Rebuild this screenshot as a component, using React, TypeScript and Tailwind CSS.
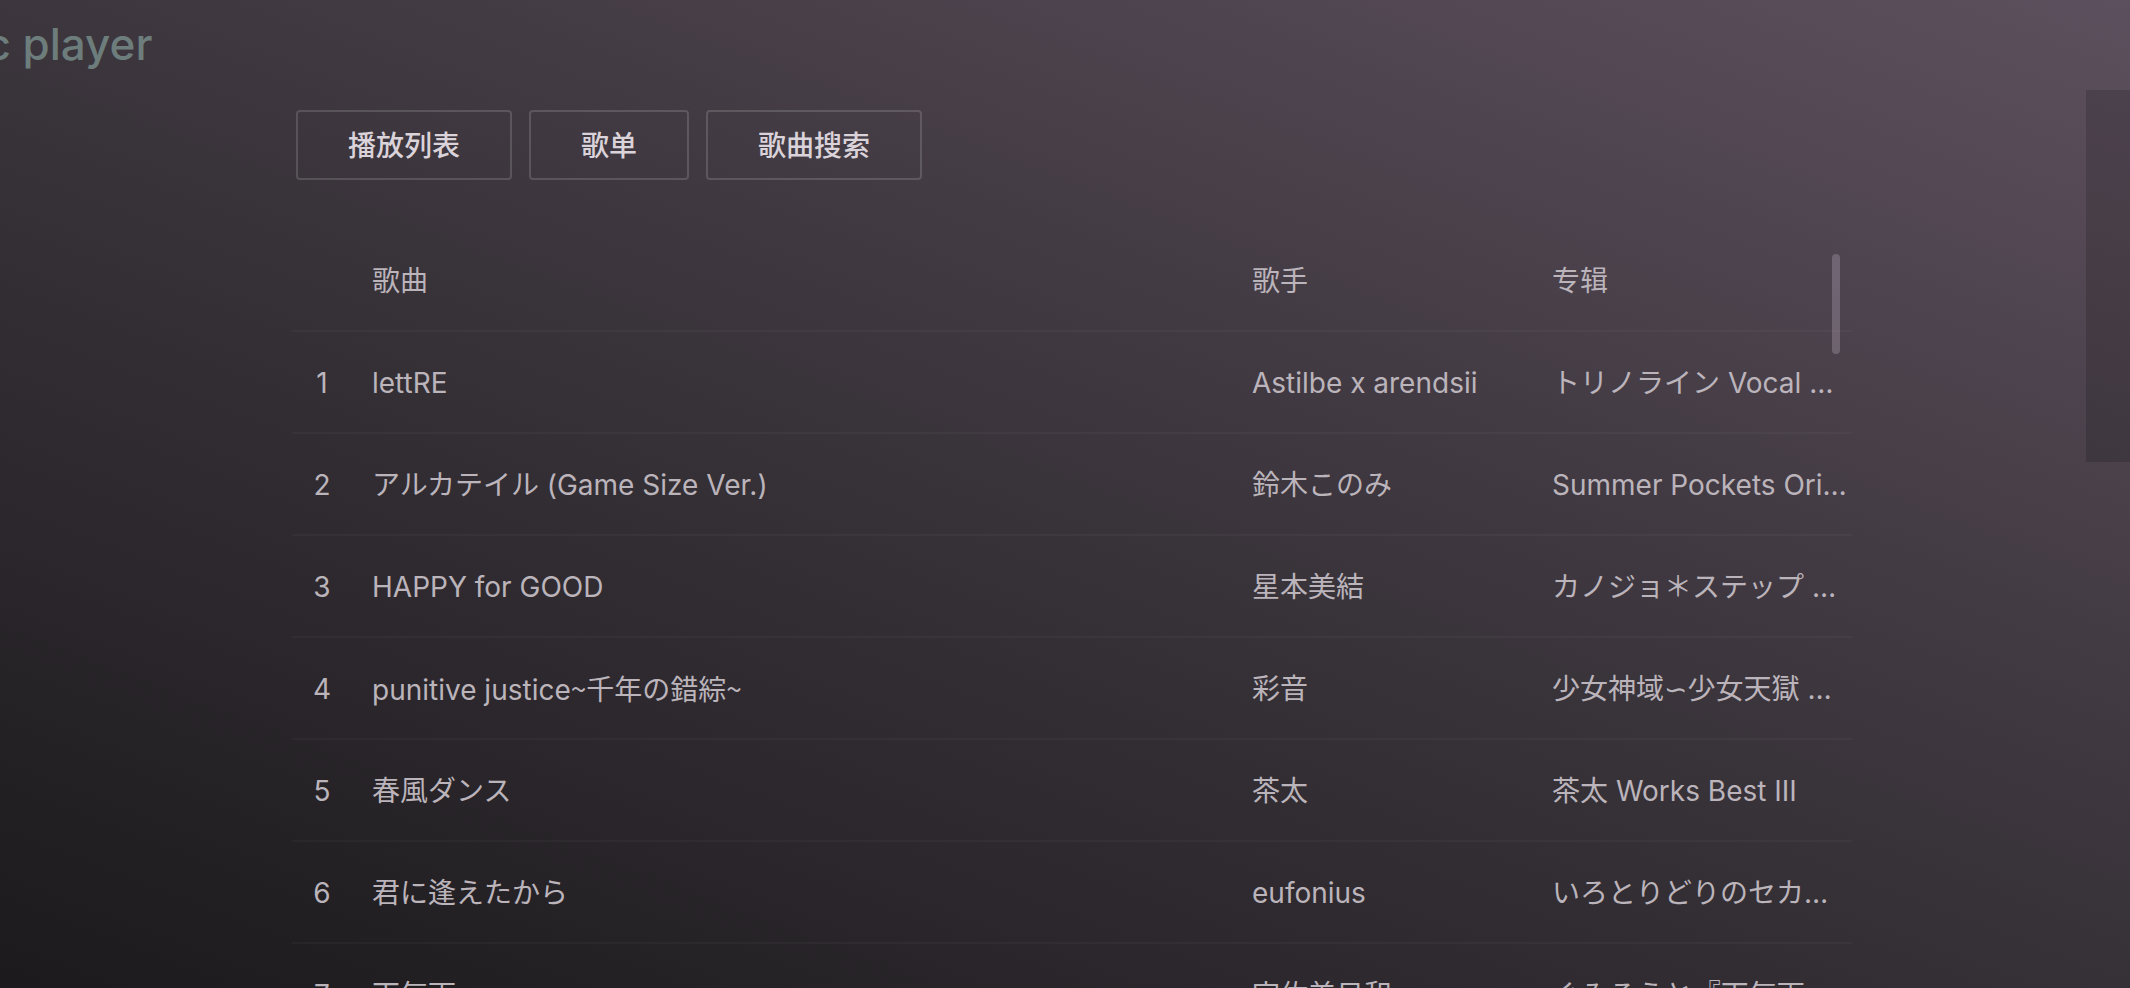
import type { ReactNode } from 'react';

type Song = { id: number; title: ReactNode; artist: string; album: ReactNode };

const Tilde = () => <span className="font-['Noto_Sans_CJK_JP',sans-serif]">~</span>;

const songs: Song[] = [
  { id: 1, title: 'lettRE', artist: 'Astilbe x arendsii', album: 'トリノライン Vocal Collection' },
  { id: 2, title: 'アルカテイル (Game Size Ver.)', artist: '鈴木このみ', album: 'Summer Pockets Original Soundtrack' },
  { id: 3, title: 'HAPPY for GOOD', artist: '星本美結', album: 'カノジョ＊ステップ Original Soundtrack' },
  {
    id: 4,
    title: (
      <>
        punitive justice
        <Tilde />
        千年の錯綜
        <Tilde />
      </>
    ),
    artist: '彩音',
    album: (
      <>
        少女神域<span className="font-['DejaVu_Sans',sans-serif] leading-none">∽</span>少女天獄 Original Soundtrack
      </>
    ),
  },
  { id: 5, title: '春風ダンス', artist: '茶太', album: '茶太 Works Best III' },
  { id: 6, title: '君に逢えたから', artist: 'eufonius', album: 'いろとりどりのセカイ Original Soundtrack' },
  { id: 7, title: '天気雨', artist: '宇佐美日和', album: 'ぐみろうと『天気雨 Original Soundtrack' },
];

const tabs = ['播放列表', '歌单', '歌曲搜索'];

const cell = 'truncate border-b-2 border-white/[0.03] pt-0.5 pb-0 pl-5 text-left font-normal';

export default function App() {
  return (
    <div className="relative h-screen overflow-hidden bg-linear-[21deg] from-[#1c1a1d] via-[#39333a] to-[#5d505e] font-['Inter','Noto_Sans_CJK_SC',sans-serif]">
      <header className="flex h-[110px] items-start overflow-hidden pt-[14px]">
        <h1 className="-ml-[116px] text-[44px] leading-[60px] font-medium whitespace-nowrap text-[#6d7d7c]">Music player</h1>
      </header>

      <div className="flex items-start">
        <main className="ml-[292px] w-[1560px] shrink-0">
          <nav className="flex gap-[17px] pl-1">
            {tabs.map((tab) => (
              <button
                key={tab}
                type="button"
                className="h-[70px] rounded border-2 border-white/15 px-[50px] pt-0.5 text-[28px] leading-10 font-medium text-[#dad3da]"
              >
                {tab}
              </button>
            ))}
          </nav>

          <table className="mt-[50px] w-full table-fixed border-separate border-spacing-0 text-[28px] leading-10 text-[#bbb4bb]">
            <colgroup>
              <col className="w-[60px]" />
              <col />
              <col className="w-[300px]" />
              <col className="w-[320px]" />
            </colgroup>
            <thead>
              <tr className="h-[102px]">
                <td className={cell} />
                <th scope="col" className={cell}>歌曲</th>
                <th scope="col" className={cell}>歌手</th>
                <th scope="col" className={cell}>专辑</th>
              </tr>
            </thead>
            <tbody className="font-['Inter','Noto_Sans_CJK_JP',sans-serif]">
              {songs.map((song) => (
                <tr key={song.id} className="h-[102px]">
                  <td className="border-b-2 border-white/[0.03] px-0 pt-0.5 pb-0 text-center">{song.id}</td>
                  <td className={cell}>{song.title}</td>
                  <td className={cell}>{song.artist}</td>
                  <td className={cell}>{song.album}</td>
                </tr>
              ))}
            </tbody>
          </table>
        </main>
      </div>

      <div className="absolute top-[254px] right-[290px] h-[100px] w-2 rounded-full bg-[#fbeaff]/20" />
      <aside className="absolute top-[90px] right-0 h-[372px] w-11 bg-black/15" />
    </div>
  );
}
